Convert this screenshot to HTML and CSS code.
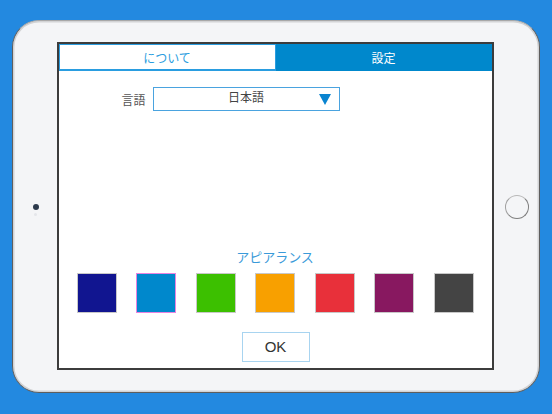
FILE: index.html
```html
<!DOCTYPE html>
<html lang="ja">
<head>
<meta charset="utf-8">
<link rel="stylesheet" href="styles.css">
</head>
<body>
<div class="page">
  <div class="device">
    <div class="bezel-left"><span class="camera"></span><span class="sensor"></span></div>
    <div class="screen">
      <div class="tabs">
        <div class="tab tab-about">について</div>
        <div class="tab tab-settings">設定</div>
      </div>
      <div class="lang-row">
        <span class="lang-label">言語</span>
        <div class="select">
          <span class="select-value">日本語</span>
          <span class="select-arrow"></span>
        </div>
      </div>
      <div class="appearance">
        <div class="appearance-title">アピアランス</div>
        <div class="swatches">
          <span class="swatch navy"></span>
          <span class="swatch blue selected"></span>
          <span class="swatch green"></span>
          <span class="swatch orange"></span>
          <span class="swatch red"></span>
          <span class="swatch purple"></span>
          <span class="swatch gray"></span>
        </div>
        <button class="ok">OK</button>
      </div>
    </div>
    <div class="bezel-right"><span class="home"></span></div>
  </div>
</div>
</body>
</html>
```

FILE: styles.css
```css
* { box-sizing: border-box; }
html, body { margin: 0; padding: 0; }
body {
  background: #2389e0;
  font-family: "Liberation Sans", "Noto Sans CJK JP", sans-serif;
  width: 552px;
  height: 414px;
  overflow: hidden;
}
.page {
  padding: 20px 12px 21px 12px;
}
.device {
  width: 528px;
  height: 373px;
  background: #f4f5f7;
  border-radius: 27px;
  border: 1.5px solid #5e5e5e;
  border-top-color: #a8a8a8;
  box-shadow: inset 0 0 0 1.5px #d2d3d5;
  display: flex;
  padding: 20.5px 0 21.5px 0;
}
.bezel-left {
  width: 43.5px;
  display: flex;
  flex-direction: column;
  align-items: center;
  justify-content: center;
  gap: 3px;
  padding-left: 2px;
  padding-top: 7px;
}
.camera {
  width: 6px;
  height: 6px;
  border-radius: 50%;
  background: #2c3a4c;
}
.sensor {
  width: 3px;
  height: 3px;
  border-radius: 50%;
  background: #e4e6ea;
}
.bezel-right {
  width: 44.5px;
  display: flex;
  align-items: center;
  justify-content: center;
  padding-top: 2px;
  padding-left: 2px;
}
.home {
  width: 24px;
  height: 24px;
  border-radius: 50%;
  border: 1.5px solid #7e7e7e;
  border-top-color: #b8b8b8;
  border-left-color: #a0a0a0;
}
.screen {
  width: 437px;
  height: 328px;
  border: 2px solid #3c3c3c;
  background: #ffffff;
  display: flex;
  flex-direction: column;
}
.tabs {
  display: flex;
  height: 27px;
}
.tab {
  flex: 1;
  display: flex;
  align-items: center;
  justify-content: center;
  font-family: "Noto Sans CJK JP", sans-serif;
  font-size: 12px;
}
.tab-about {
  color: #2a9de0;
  border: 1px solid #2a9de0;
  border-bottom-width: 2px;
  flex: 0 0 217px;
  padding-top: 1px;
}
.tab-settings {
  background: #0088cc;
  color: #ffffff;
  padding-top: 1px;
}
.lang-row {
  display: flex;
  align-items: center;
  margin-top: 16px;
  padding-left: 63px;
  gap: 7px;
}
.lang-label {
  font-family: "Noto Sans CJK JP", sans-serif;
  font-size: 12px;
  color: #555555;
  padding-top: 1px;
}
.select {
  width: 187px;
  height: 24px;
  border: 1px solid #4aa3df;
  position: relative;
  display: flex;
  align-items: center;
  justify-content: center;
}
.select-value {
  font-family: "Noto Sans CJK JP", sans-serif;
  font-size: 12px;
  color: #444444;
  margin-top: -5px;
}
.select-arrow {
  position: absolute;
  right: 8px;
  top: 6px;
  width: 0;
  height: 0;
  border-left: 6px solid transparent;
  border-right: 6px solid transparent;
  border-top: 11px solid #0a84d0;
}
.appearance {
  margin-top: auto;
  display: flex;
  flex-direction: column;
  align-items: center;
  padding-bottom: 6px;
}
.appearance-title {
  font-family: "Noto Sans CJK JP", sans-serif;
  font-size: 13px;
  line-height: 16px;
  color: #3a9ad9;
  margin-bottom: 8px;
}
.swatches {
  width: 100%;
  display: flex;
  justify-content: space-between;
  padding: 0 18px 0 18px;
  margin-bottom: 19px;
}
.swatch {
  width: 40px;
  height: 40px;
  border: 1px solid #c8c8c8;
}
.swatch.selected { border-color: #e882e0; }
.navy { background: #111590; }
.blue { background: #0088cc; }
.green { background: #3cc000; }
.orange { background: #f8a000; }
.red { background: #e8303a; }
.purple { background: #881860; }
.gray { background: #444444; }
.ok {
  width: 68px;
  height: 30px;
  border: 1px solid #a8d4f0;
  background: #ffffff;
  font-family: "Liberation Sans", sans-serif;
  font-size: 15px;
  color: #333333;
  padding: 0;
  margin-left: 1px;
}
```
